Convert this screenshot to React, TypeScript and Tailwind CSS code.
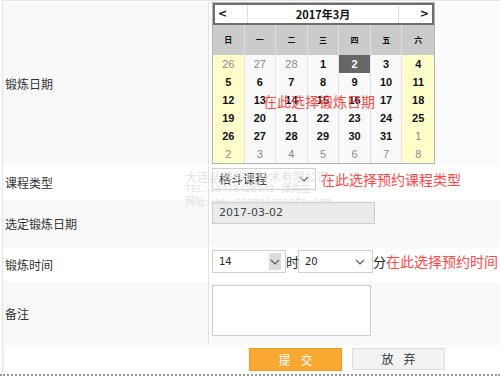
import React from "react";

const CJK = { fontFamily: '"Noto Sans CJK SC", "Noto Sans", sans-serif' };
const NUM = { fontFamily: '"Liberation Sans", Arial, sans-serif' };
const NUM2 = { fontFamily: '"DejaVu Sans", Verdana, sans-serif' };

type Cell = { d: number; other?: boolean; sel?: boolean };

const weeks: Cell[][] = [
  [{ d: 26, other: true }, { d: 27, other: true }, { d: 28, other: true }, { d: 1 }, { d: 2, sel: true }, { d: 3 }, { d: 4 }],
  [5, 6, 7, 8, 9, 10, 11].map((d) => ({ d })),
  [12, 13, 14, 15, 16, 17, 18].map((d) => ({ d })),
  [19, 20, 21, 22, 23, 24, 25].map((d) => ({ d })),
  [{ d: 26 }, { d: 27 }, { d: 28 }, { d: 29 }, { d: 30 }, { d: 31 }, { d: 1, other: true }],
  [2, 3, 4, 5, 6, 7, 8].map((d) => ({ d, other: true })),
];

const wd = ["日", "一", "二", "三", "四", "五", "六"];

function Chevron() {
  return (
    <svg width="10" height="6" viewBox="0 0 10 6" fill="none">
      <path d="M1 1l4 4 4-4" stroke="#555" strokeWidth="1.1" />
    </svg>
  );
}

function Calendar() {
  return (
    <div className="w-[223px] border border-[#b5b5b5] bg-white">
      <div className="flex h-[22px] border-2 border-[#6e6e6e] bg-white text-[11px] font-bold text-[#111]" style={NUM2}>
        <div className="w-[33px] flex items-center pl-[3px] border-r border-[#ddd]">&lt;</div>
        <div className="flex-1 flex items-center justify-center border-r border-[#ddd]" style={CJK}>2017年3月</div>
        <div className="w-[33px] flex items-center justify-end pr-[3px]">&gt;</div>
      </div>
      <div className="grid grid-cols-7 h-[30px] bg-[#cbcbcb]">
        {wd.map((w, i) => (
          <div key={i} className={`flex items-center justify-center text-[8px] font-bold text-[#111] ${i < 6 ? "border-r border-[#e0e0e0]" : ""}`} style={CJK}>
            {w}
          </div>
        ))}
      </div>
      {weeks.map((row, ri) => (
        <div key={ri} className="grid grid-cols-7 h-[18px]">
          {row.map((c, ci) => {
            const weekend = ci === 0 || ci === 6;
            const bg = c.sel ? "bg-[#666666]" : weekend ? "bg-[#ffffcc]" : "bg-[#f9f9f9]";
            const color = c.sel ? "text-white font-bold" : c.other ? "text-[#8a8a8a]" : "text-[#111] font-bold";
            return (
              <div
                key={ci}
                className={`flex items-center justify-center text-[11px] ${bg} ${color} ${ci < 6 ? "border-r border-[#e4e4e4]" : ""}`}
                style={NUM}
              >
                {c.d}
              </div>
            );
          })}
        </div>
      ))}
    </div>
  );
}

function Row({ label, bg, height, children }: { label: string; bg: string; height: number; children: React.ReactNode }) {
  return (
    <div className={`flex ${bg}`} style={{ height }}>
      <div className="w-[206px] flex items-center pl-[2px] text-[12px] text-[#333] border-r border-[#e2e2e2]" style={CJK}>
        {label}
      </div>
      <div className="w-[2px] bg-white" />
      <div className="flex-1 pl-[1px] pt-[2px]">{children}</div>
    </div>
  );
}

export default function App() {
  return (
    <div className="relative w-[500px] h-[377px] bg-white overflow-hidden" style={CJK}>
      <div className="ml-[2px] border-l border-t border-[#e5e5e5]">
        <div className="h-[1px] bg-white" />
        <div className="flex bg-[#f9f9f9] h-[163px]">
          <div className="w-[206px] flex items-center pl-[2px] text-[12px] text-[#333] border-r border-[#e2e2e2]">锻炼日期</div>
          <div className="w-[2px] bg-white" />
          <div className="flex-1 pl-[1px] bg-[#fbfbfb]">
            <Calendar />
          </div>
        </div>
        <div className="h-[1px] bg-white" />
        <Row label="课程类型" bg="bg-white" height={34}>
          <div className="flex items-center">
            <div className="w-[104px] h-[22px] border border-[#cfcfcf] bg-white flex items-center justify-between pl-[6px] pr-[6px] text-[12px] text-[#222]">
              <span>格斗课程</span>
              <Chevron />
            </div>
            <span className="ml-[5px] text-[14px] text-[#ff4848] leading-[22px]">在此选择预约课程类型</span>
          </div>
        </Row>
        <Row label="选定锻炼日期" bg="bg-[#f9f9f9]" height={47}>
          <div className="w-[163px] h-[22px] border border-[#cccccc] bg-[#ebebeb] flex items-center pl-[6px] text-[11px] text-[#444]" style={NUM2}>
            2017-03-02
          </div>
        </Row>
        <div className="h-[1px] bg-white" />
        <Row label="锻炼时间" bg="bg-white" height={34}>
          <div className="flex items-center text-[13px] text-[#222]">
            <div className="w-[74px] h-[23px] border border-[#cfcfcf] bg-white flex items-center justify-between pl-[6px] pr-[4px]">
              <span className="text-[10px]" style={NUM2}>14</span>
              <span className="w-[12px] h-[17px] bg-[#dcdcdc] flex items-center justify-center"><Chevron /></span>
            </div>
            <span className="w-[12px] text-center">时</span>
            <div className="w-[75px] h-[23px] border border-[#cfcfcf] bg-white flex items-center justify-between pl-[6px] pr-[7px]">
              <span className="text-[10px]" style={NUM2}>20</span>
              <Chevron />
            </div>
            <span>分</span>
            <span className="text-[14px] text-[#ff4848]">在此选择预约时间</span>
          </div>
        </Row>
        <Row label="备注" bg="bg-[#f9f9f9]" height={63}>
          <div className="pt-[1px]">
            <div className="w-[159px] h-[51px] border border-[#cccccc] bg-white" />
          </div>
        </Row>
        <div className="h-[2px] bg-white" />
        <div className="h-[26px] flex items-start pt-[1px] pl-[245px] gap-[10px] border-l border-[#eee]">
          <button className="w-[93px] h-[23px] bg-[#f9a832] border border-[#f29a20] text-white text-[12px] tracking-[10px] pl-[10px]">提交</button>
          <button className="w-[93px] h-[22px] bg-[#f3f3f3] border border-[#dddddd] text-[#333] text-[12px] tracking-[10px] pl-[10px]">放弃</button>
        </div>
      </div>
      <div className="absolute left-0 right-0 top-[374px] h-[3px] border-t-2 border-dotted border-[#9a9a9a]" />

      <div className="absolute left-[263px] top-[91px] text-[14px] text-[#ff4a4a] pointer-events-none">在此选择锻炼日期</div>

      <div className="absolute left-[185px] top-[170px] text-[12px] leading-[13px] text-[#dcdcdc] opacity-80 pointer-events-none">
        <div>大连丛健信息技术有限公司</div>
        <div style={{ fontFamily: '"Liberation Mono", "Noto Sans CJK SC", monospace', fontSize: 10 }}>TEL:13478428141 谭先生</div>
        <div style={{ fontFamily: '"Liberation Mono", "Noto Sans CJK SC", monospace', fontSize: 10 }}>网址:www.congjianinfo.com</div>
      </div>
    </div>
  );
}
